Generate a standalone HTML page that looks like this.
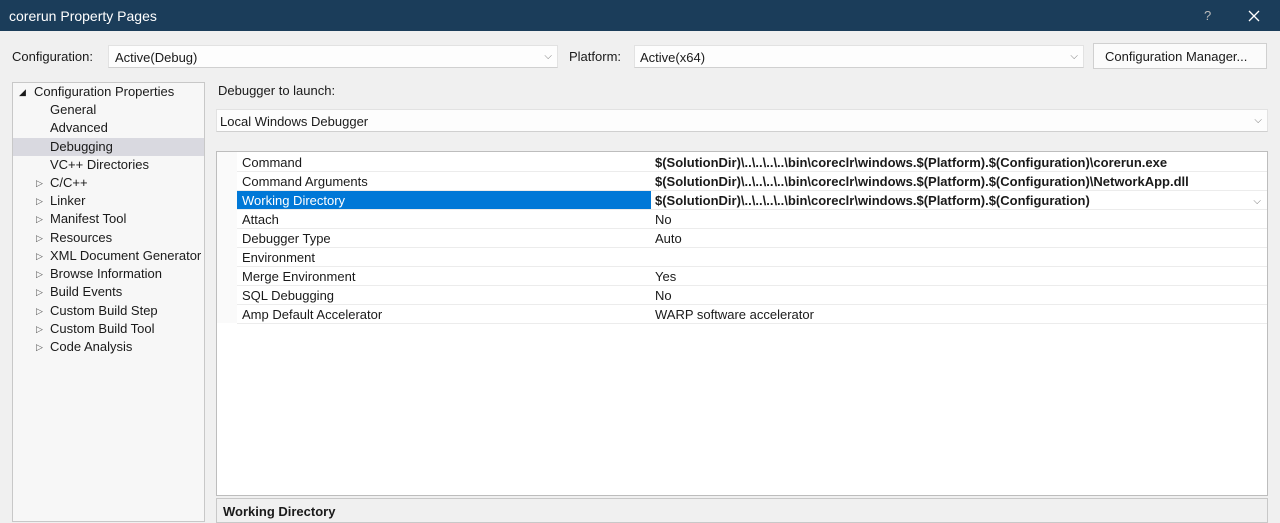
<!DOCTYPE html>
<html><head><meta charset="utf-8"><style>
*{margin:0;padding:0;box-sizing:border-box}
body{width:1280px;height:519px;overflow:hidden;background:#f0f0f0;font-family:"Liberation Sans",sans-serif;font-size:13px;color:#1a1a1a;position:relative}
.a{position:absolute;white-space:nowrap}
.title{left:0;top:0;width:1280px;height:31px;background:#1b3d5a;color:#fff}
.box{background:#fdfdfd;border:1px solid #e2e2e2;border-bottom-color:#d0d0d0}
.chev{position:absolute;font-size:10px;color:#777}
.tree{left:12px;top:82px;width:193px;height:440px;background:#f7f7f7;border:1px solid #c8c8c8}
.tree div{position:absolute;left:0;height:18px;line-height:18px;width:191px}
.grid{left:216px;top:151px;width:1052px;height:345px;background:#fff;border:1px solid #bdbdbd}
.row{position:absolute;left:20px;width:1030px;height:19px;line-height:19px;border-bottom:1px solid #ececec}
.row span{position:absolute;left:5px}
.row b{position:absolute;left:418px;font-weight:bold}
.row i{position:absolute;left:418px;font-style:normal}
</style></head><body>
<div class="a title"><span class="a" style="left:9px;top:8px;font-size:14px">corerun Property Pages</span>
<span class="a" style="left:1204px;top:8px;font-size:13px;color:#bbb">?</span>
<svg class="a" style="left:1248px;top:10px" width="12" height="12"><path d="M1 1L11 11M11 1L1 11" stroke="#fff" stroke-width="1.3"/></svg></div>
<span class="a" style="left:12px;top:49px">Configuration:</span>
<div class="a box" style="left:108px;top:45px;width:450px;height:23px"><span class="a" style="left:6px;top:4px">Active(Debug)</span><span class="chev" style="right:5px;top:5px">⌵</span></div>
<span class="a" style="left:569px;top:49px">Platform:</span>
<div class="a box" style="left:634px;top:45px;width:450px;height:23px"><span class="a" style="left:5px;top:4px">Active(x64)</span><span class="chev" style="right:5px;top:5px">⌵</span></div>
<div class="a box" style="left:1093px;top:43px;width:174px;height:26px;background:#fbfbfb;border-color:#d0d0d0"><span class="a" style="left:11px;top:5px">Configuration Manager...</span></div>
<div class="a tree">
<div style="top:0"><span class="a" style="left:6px;font-size:9px">◢</span><span class="a" style="left:21px">Configuration Properties</span></div>
<div style="top:18px"><span class="a" style="left:37px">General</span></div>
<div style="top:36px"><span class="a" style="left:37px">Advanced</span></div>
<div style="top:55px;background:#d9d9e0"><span class="a" style="left:37px">Debugging</span></div>
<div style="top:73px"><span class="a" style="left:37px">VC++ Directories</span></div>
<div style="top:91px"><span class="a" style="left:23px;font-size:9px;color:#555">▷</span><span class="a" style="left:37px">C/C++</span></div>
<div style="top:109px"><span class="a" style="left:23px;font-size:9px;color:#555">▷</span><span class="a" style="left:37px">Linker</span></div>
<div style="top:127px"><span class="a" style="left:23px;font-size:9px;color:#555">▷</span><span class="a" style="left:37px">Manifest Tool</span></div>
<div style="top:146px"><span class="a" style="left:23px;font-size:9px;color:#555">▷</span><span class="a" style="left:37px">Resources</span></div>
<div style="top:164px;overflow:hidden"><span class="a" style="left:23px;font-size:9px;color:#555">▷</span><span class="a" style="left:37px">XML Document Generator</span></div>
<div style="top:182px"><span class="a" style="left:23px;font-size:9px;color:#555">▷</span><span class="a" style="left:37px">Browse Information</span></div>
<div style="top:200px"><span class="a" style="left:23px;font-size:9px;color:#555">▷</span><span class="a" style="left:37px">Build Events</span></div>
<div style="top:219px"><span class="a" style="left:23px;font-size:9px;color:#555">▷</span><span class="a" style="left:37px">Custom Build Step</span></div>
<div style="top:237px"><span class="a" style="left:23px;font-size:9px;color:#555">▷</span><span class="a" style="left:37px">Custom Build Tool</span></div>
<div style="top:255px"><span class="a" style="left:23px;font-size:9px;color:#555">▷</span><span class="a" style="left:37px">Code Analysis</span></div>
</div>
<span class="a" style="left:218px;top:83px">Debugger to launch:</span>
<div class="a box" style="left:216px;top:109px;width:1052px;height:23px"><span class="a" style="left:3px;top:4px">Local Windows Debugger</span><span class="chev" style="right:5px;top:5px">⌵</span></div>
<div class="a grid">
<div class="a" style="left:0;top:0;width:20px;height:171px;background:#fafafa"></div>
<div class="row" style="top:1px"><span>Command</span><b>$(SolutionDir)\..\..\..\..\bin\coreclr\windows.$(Platform).$(Configuration)\corerun.exe</b></div>
<div class="row" style="top:20px"><span>Command Arguments</span><b>$(SolutionDir)\..\..\..\..\bin\coreclr\windows.$(Platform).$(Configuration)\NetworkApp.dll</b></div>
<div class="row" style="top:39px"><div class="a" style="left:0;top:0;width:414px;height:18px;background:#0078d7"></div><span style="color:#fff">Working Directory</span><b>$(SolutionDir)\..\..\..\..\bin\coreclr\windows.$(Platform).$(Configuration)</b><span class="chev" style="left:auto;right:6px;top:1px">⌵</span></div>
<div class="row" style="top:58px"><span>Attach</span><i>No</i></div>
<div class="row" style="top:77px"><span>Debugger Type</span><i>Auto</i></div>
<div class="row" style="top:96px"><span>Environment</span></div>
<div class="row" style="top:115px"><span>Merge Environment</span><i>Yes</i></div>
<div class="row" style="top:134px"><span>SQL Debugging</span><i>No</i></div>
<div class="row" style="top:153px"><span>Amp Default Accelerator</span><i>WARP software accelerator</i></div>
</div>
<div class="a" style="left:216px;top:498px;width:1052px;height:25px;border:1px solid #c8c8c8;background:#f0f0f0"><span class="a" style="left:6px;top:5px;font-weight:bold">Working Directory</span></div>
</body></html>
